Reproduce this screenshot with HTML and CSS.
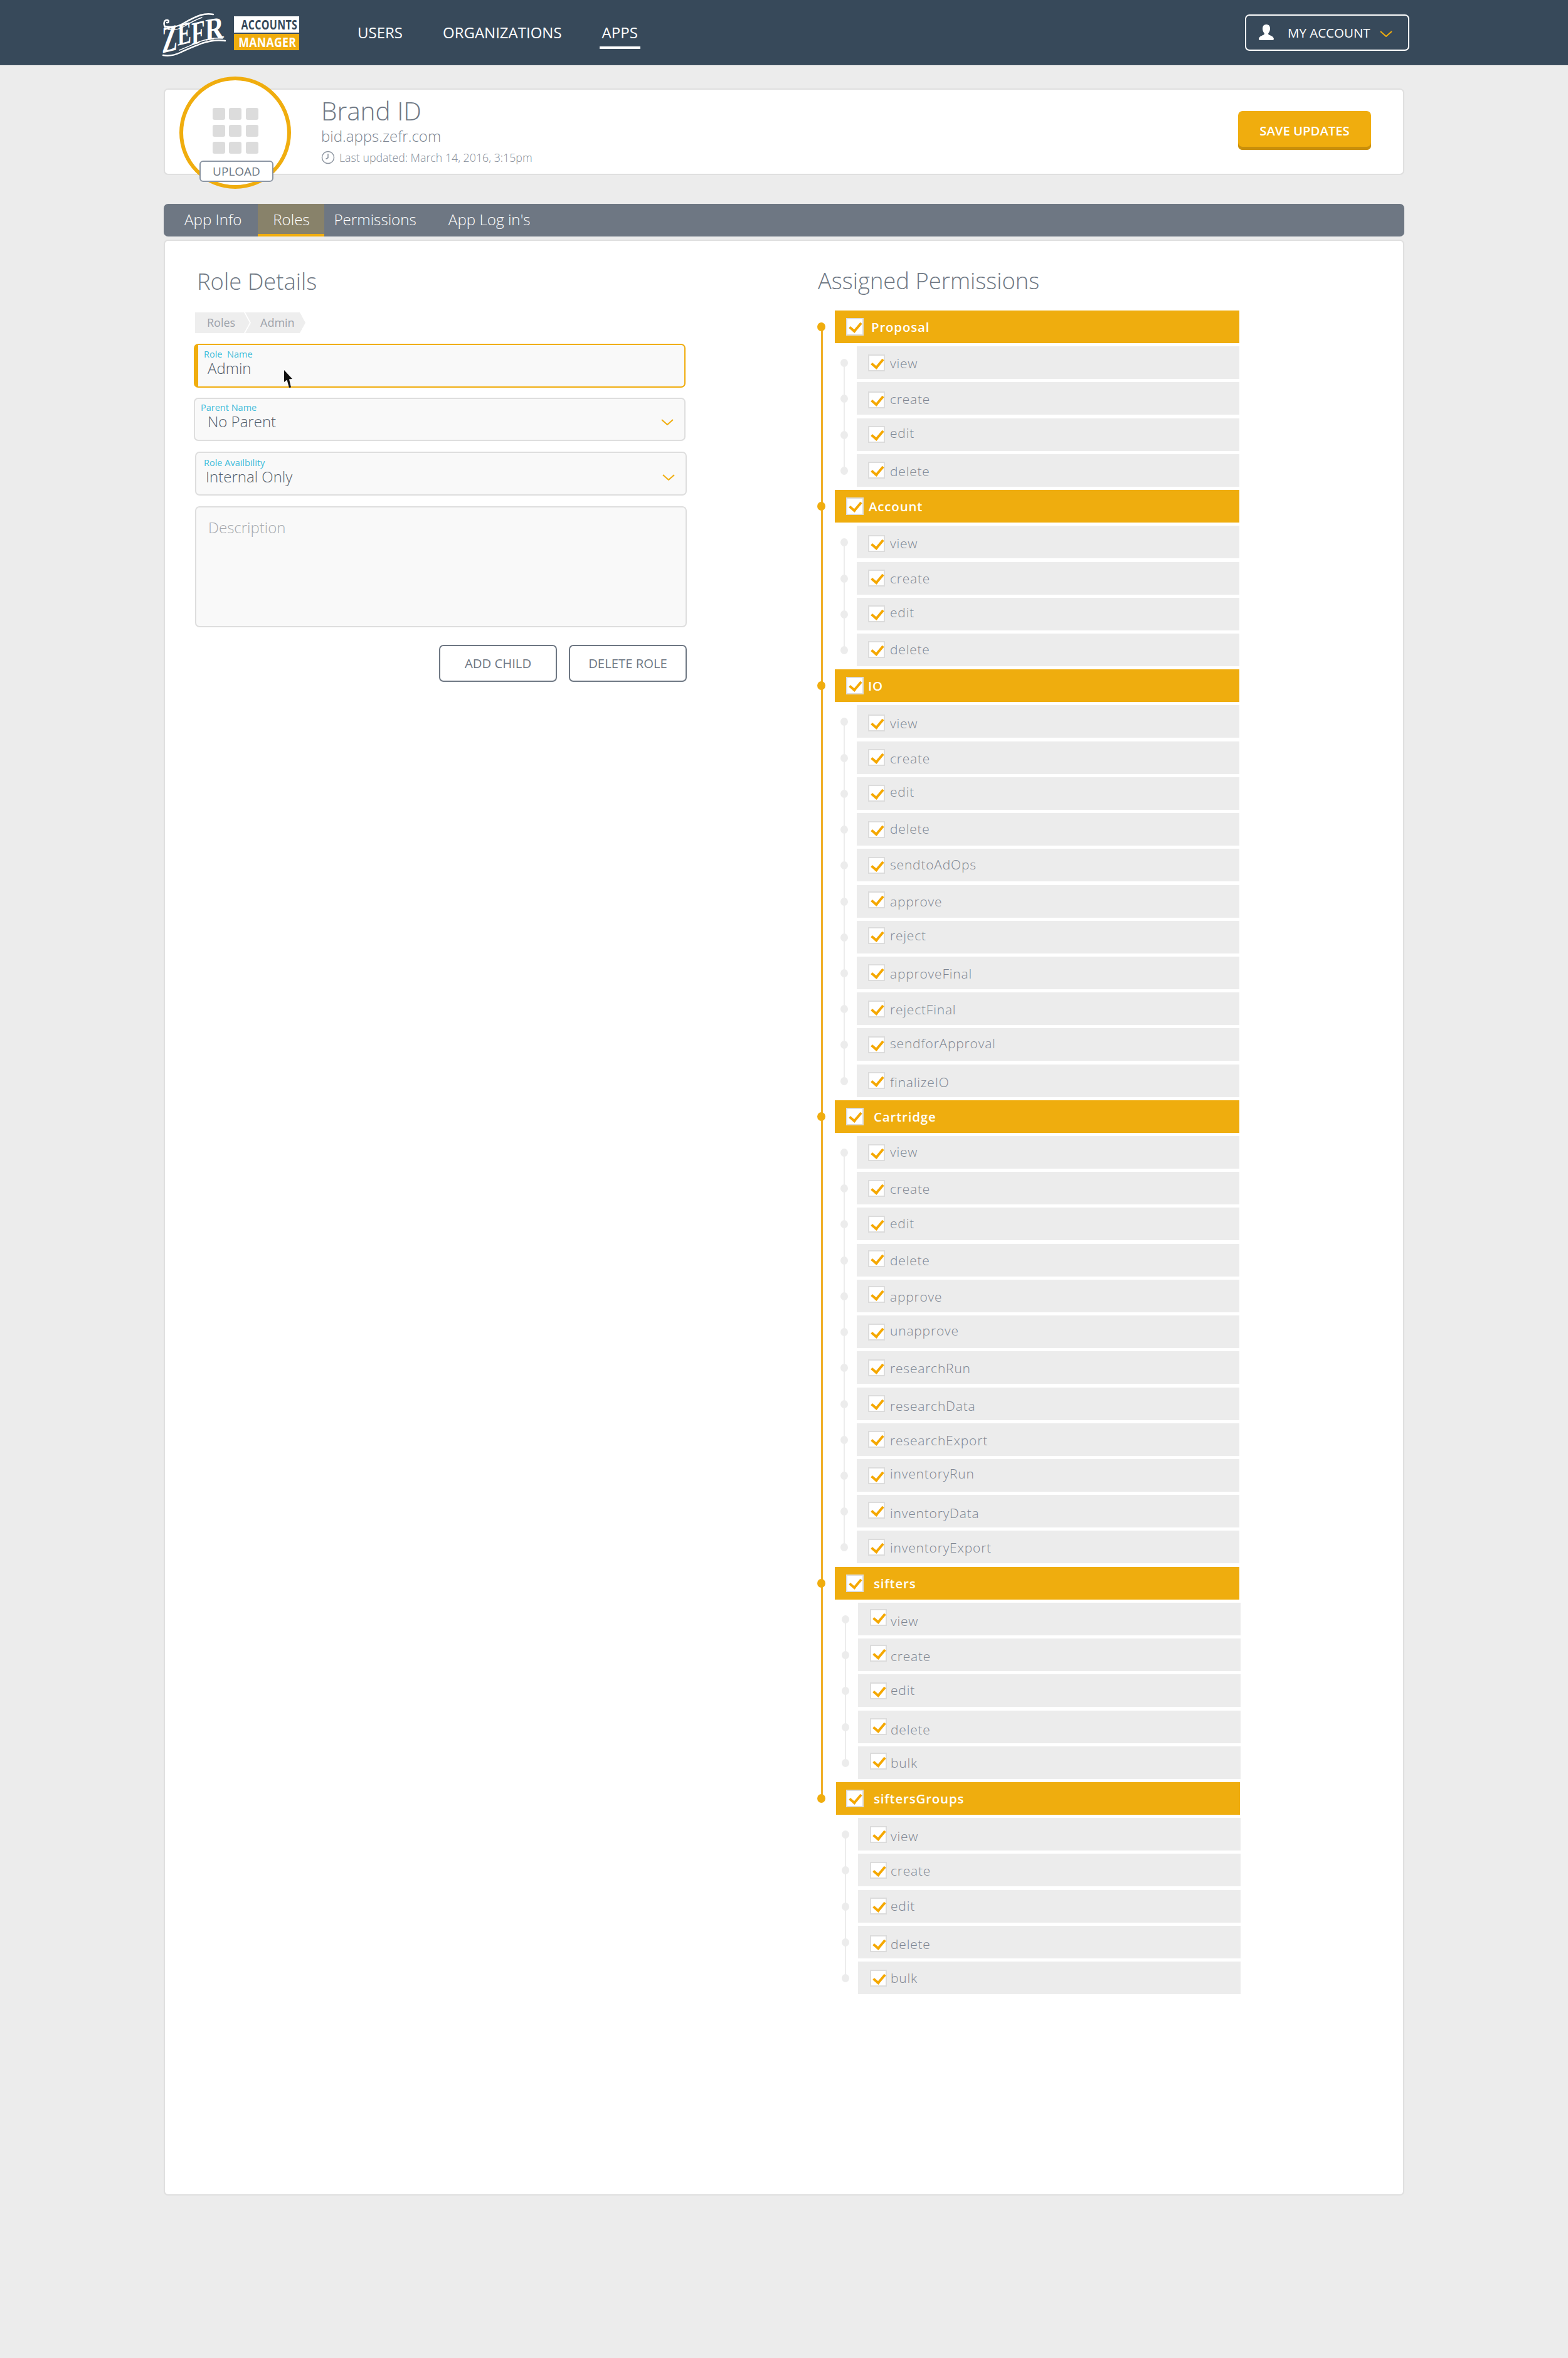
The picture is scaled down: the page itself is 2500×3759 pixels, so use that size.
FILE: index.html
```html
<!DOCTYPE html>
<html lang="en">
<head>
<meta charset="utf-8">
<title>ZEFR Accounts Manager</title>
<link rel="stylesheet" href="styles.css">
</head>
<body>
<header class="topbar">
  <div class="brand">
    <svg class="zefr" viewBox="0 0 110 76" width="110" height="76" aria-label="ZEFR">
      <g fill="none" stroke="#fff" stroke-linecap="round">
        <path stroke-width="2.4" d="M7 25C4 19 6 13 11 14c3 1 2 5-1 4M8 24c9 2 17 1 25-3C44 15 54 9 64 6c7-2 15-2 20-1"/>
        <path stroke-width="1.4" d="M12 29c9 1 17 0 24-4C46 19 56 13 66 10"/>
        <path stroke-width="2.4" d="M4 70c9 2 18 0 27-4C43 60 54 56 66 51c12-4 25-6 37-4"/>
        <path stroke-width="1.4" d="M30 62c10-4 21-9 33-14 12-4 25-6 36-5"/>
      </g>
      <g class="zefr-letters" fill="#fff">
        <text transform="translate(2 67) skewY(-14) scale(.62 1)" font-size="60">Z</text>
        <text transform="translate(27 55) skewY(-14) scale(.66 1)" font-size="50">E</text>
        <text transform="translate(49 54) skewY(-14) scale(.68 1)" font-size="52">F</text>
        <text transform="translate(71 47) skewY(-10) scale(.82 1)" font-size="50">R</text>
      </g>
    </svg>
    <div class="lockup">
      <span class="lockup-a"><span class="squeeze">ACCOUNTS</span></span>
      <span class="lockup-m"><span class="squeeze squeeze-m">MANAGER</span></span>
    </div>
  </div>
  <nav class="nav">
    <a class="nav-item">USERS</a>
    <a class="nav-item">ORGANIZATIONS</a>
    <a class="nav-item nav-active">APPS</a>
  </nav>
  <button class="account">
    <svg class="person" viewBox="0 0 24 26" width="24" height="26"><path fill="#fff" d="M12 0c4 0 6 2.800 6 6.500 0 3-1 5.500-2.600 7.300-.5.600-.4 2 .4 2.500 2.700 1.500 7.400 2.700 8.100 6.200.2 1.400-.5 2.500-2 2.500H2.100C.6 25-.1 23.900.1 22.500c.7-3.500 5.400-4.700 8.100-6.200.8-.5.900-1.900.4-2.500C7 12 6 9.500 6 6.500 6 2.800 8 0 12 0z"/></svg>
    <span class="account-text">MY ACCOUNT</span>
    <svg class="chev" viewBox="0 0 20 10" width="20" height="10"><path d="M1 1l9 8 9-8"/></svg>
  </button>
</header>

<main class="page">
  <section class="card-top">
    <div class="avatar">
      <div class="app-grid"><i></i><i></i><i></i><i></i><i></i><i></i><i></i><i></i><i></i></div>
      <span class="upload">UPLOAD</span>
    </div>
    <div class="app-info">
      <h1 class="app-name">Brand ID</h1>
      <div class="app-url">bid.apps.zefr.com</div>
      <div class="app-updated">
        <svg viewBox="0 0 22 22" width="22" height="22"><circle cx="11" cy="11" r="9.500" fill="none" stroke="#8d95a0" stroke-width="1.500"/><path d="M11 5v6.500l-3.500 2" fill="none" stroke="#8d95a0" stroke-width="1.500"/></svg>
        <span>Last updated: March 14, 2016, 3:15pm</span>
      </div>
    </div>
    <button class="save">SAVE UPDATES</button>
  </section>

  <div class="tabs">
    <a class="tab tab-info">App Info</a>
    <a class="tab tab-roles">Roles</a>
    <a class="tab tab-perm">Permissions</a>
    <a class="tab tab-log">App Log in's</a>
  </div>

  <section class="card-main">
    <div class="col-left">
      <h2 class="title-role">Role Details</h2>
      <div class="crumbs">
        <span class="crumb crumb-first">Roles</span>
        <span class="crumb crumb-last">Admin</span>
      </div>
      <div class="field field-name">
        <div class="field-body">
          <label class="field-label">Role&nbsp; Name</label>
          <div class="field-value">Admin</div>
        </div>
        <svg class="cursor" viewBox="0 0 14 28" width="14" height="28"><path fill="#111" d="M0 0l13 14-5 .5 3 13-3 .5-3.500-12.500L0 19z"/></svg>
      </div>
      <div class="field field-parent">
        <div class="field-body">
          <label class="field-label">Parent Name</label>
          <div class="field-value">No Parent</div>
        </div>
        <svg class="chev" viewBox="0 0 20 10" width="20" height="10"><path d="M1 1l9 8 9-8"/></svg>
      </div>
      <div class="field field-avail">
        <div class="field-body">
          <label class="field-label">Role Availbility</label>
          <div class="field-value">Internal Only</div>
        </div>
        <svg class="chev" viewBox="0 0 20 10" width="20" height="10"><path d="M1 1l9 8 9-8"/></svg>
      </div>
      <div class="desc">Description</div>
      <div class="actions">
        <button class="ghost">ADD CHILD</button>
        <button class="ghost">DELETE ROLE</button>
      </div>
    </div>

    <div class="col-right">
      <h2 class="title-perm">Assigned Permissions</h2>
      <div class="tree">

        <div class="group">
          <div class="head"><span class="box"></span><span class="head-text ht-proposal">Proposal</span></div>
          <div class="subs">
            <div class="row"><span class="box"></span><span class="lbl t1">view</span></div>
            <div class="row"><span class="box c-p2"></span><span class="lbl t1">create</span></div>
            <div class="row"><span class="box"></span><span class="lbl t-3">edit</span></div>
            <div class="row"><span class="box"></span><span class="lbl t1">delete</span></div>
          </div>
        </div>

        <div class="group">
          <div class="head"><span class="box"></span><span class="head-text ht-account">Account</span></div>
          <div class="subs">
            <div class="row"><span class="box c-p2"></span><span class="lbl t2">view</span></div>
            <div class="row"><span class="box"></span><span class="lbl t0">create</span></div>
            <div class="row"><span class="box"></span><span class="lbl t-3">edit</span></div>
            <div class="row"><span class="box"></span><span class="lbl t-1">delete</span></div>
          </div>
        </div>

        <div class="group">
          <div class="head"><span class="box"></span><span class="head-text ht-io">IO</span></div>
          <div class="subs">
            <div class="row"><span class="box c-p2"></span><span class="lbl t3">view</span></div>
            <div class="row"><span class="box"></span><span class="lbl t1">create</span></div>
            <div class="row"><span class="box"></span><span class="lbl t-3">edit</span></div>
            <div class="row"><span class="box"></span><span class="lbl t-1">delete</span></div>
            <div class="row"><span class="box"></span><span class="lbl t-1">sendtoAdOps</span></div>
            <div class="row"><span class="box c-m2"></span><span class="lbl t0">approve</span></div>
            <div class="row"><span class="box c-m2"></span><span class="lbl t-3">reject</span></div>
            <div class="row"><span class="box"></span><span class="lbl t1">approveFinal</span></div>
            <div class="row"><span class="box"></span><span class="lbl t1">rejectFinal</span></div>
            <div class="row"><span class="box"></span><span class="lbl t-2">sendforApproval</span></div>
            <div class="row"><span class="box"></span><span class="lbl t2">finalizeIO</span></div>
          </div>
        </div>

        <div class="group">
          <div class="head"><span class="box"></span><span class="head-text ht-cart">Cartridge</span></div>
          <div class="subs">
            <div class="row"><span class="box"></span><span class="lbl t-1">view</span></div>
            <div class="row"><span class="box"></span><span class="lbl t1">create</span></div>
            <div class="row"><span class="box"></span><span class="lbl t-1">edit</span></div>
            <div class="row"><span class="box c-m2"></span><span class="lbl t0">delete</span></div>
            <div class="row"><span class="box c-m2"></span><span class="lbl t1">approve</span></div>
            <div class="row"><span class="box"></span><span class="lbl t-2">unapprove</span></div>
            <div class="row"><span class="box"></span><span class="lbl t1">researchRun</span></div>
            <div class="row"><span class="box"></span><span class="lbl t3">researchData</span></div>
            <div class="row"><span class="box"></span><span class="lbl t1">researchExport</span></div>
            <div class="row"><span class="box"></span><span class="lbl t-3">inventoryRun</span></div>
            <div class="row"><span class="box c-m2"></span><span class="lbl t3">inventoryData</span></div>
            <div class="row"><span class="box"></span><span class="lbl t1">inventoryExport</span></div>
          </div>
        </div>

        <div class="group">
          <div class="head"><span class="box"></span><span class="head-text ht-sift">sifters</span></div>
          <div class="subs subs-shift">
            <div class="row"><span class="box c-m2"></span><span class="lbl t3">view</span></div>
            <div class="row"><span class="box c-m3"></span><span class="lbl t2">create</span></div>
            <div class="row"><span class="box"></span><span class="lbl t-1">edit</span></div>
            <div class="row"><span class="box"></span><span class="lbl t4">delete</span></div>
            <div class="row"><span class="box c-m2"></span><span class="lbl t0">bulk</span></div>
          </div>
        </div>

        <div class="group">
          <div class="head head-shift"><span class="box"></span><span class="head-text ht-sift">siftersGroups</span></div>
          <div class="subs subs-shift">
            <div class="row"><span class="box"></span><span class="lbl t3">view</span></div>
            <div class="row"><span class="box"></span><span class="lbl t1">create</span></div>
            <div class="row"><span class="box"></span><span class="lbl t-1">edit</span></div>
            <div class="row"><span class="box c-p3"></span><span class="lbl t3">delete</span></div>
            <div class="row"><span class="box"></span><span class="lbl t0">bulk</span></div>
          </div>
        </div>

      </div>
    </div>
  </section>
</main>
</body>
</html>
```
FILE: styles.css
```css
* { box-sizing: border-box; }

html, body { margin: 0; padding: 0; }

body {
  min-height: 3759px;
  background: #ececec;
  font-family: "Open Sans", "Liberation Sans", sans-serif;
  color: #6e7783;
}

button { font-family: inherit; cursor: pointer; }

/* top bar */
.topbar {
  display: flex;
  height: 104px;
  background: #37495a;
  border-bottom: 1px solid #4a5a69;
  padding-right: 253px;
}

.brand {
  display: flex;
  align-items: flex-start;
  padding: 18px 0 0 256px;
  gap: 7px;
}

.zefr { overflow: visible; }
.zefr-letters { font-family: "Liberation Serif", serif; font-weight: 700; }

.lockup {
  display: flex;
  flex-direction: column;
  gap: 2px;
  width: 104px;
  padding-top: 8px;
}

.lockup-a, .lockup-m {
  display: block;
  height: 26px;
  line-height: 26px;
  text-align: center;
  font-size: 20.500px;
  font-weight: 700;
}

.lockup-a { background: #fff; color: #37495a; }
.lockup-m { background: #f0ad0e; color: #fff; }

.squeeze { display: inline-block; width: 104px; transform: scaleX(.78); white-space: nowrap; letter-spacing: .4px; }
.squeeze-m { transform: scaleX(.86); }

.nav {
  display: flex;
  align-items: flex-start;
  gap: 56px;
  margin-left: 89px;
  padding-top: 36px;
}

.nav-item {
  display: block;
  padding: 0 4px 6px;
  font-size: 24px;
  line-height: 32px;
  color: #fff;
  border-bottom: 4px solid transparent;
}

.nav-active { border-bottom-color: #fff; }

.account {
  display: flex;
  align-items: center;
  width: 262px;
  height: 58px;
  margin: 23px 0 0 auto;
  padding: 0 0 0 20px;
  background: transparent;
  border: 2px solid #fff;
  border-radius: 7px;
  color: #fff;
}

.account-text { margin-left: 22px; font-size: 20.500px; font-weight: 400; white-space: nowrap; }
.account .chev { margin: 4px 0 0 15px; }

.chev { flex: none; }
.chev path { fill: none; stroke: #f0ad0e; stroke-width: 2; }

/* layout */
.page {
  width: 1978px;
  margin-left: 261px;
  padding-top: 37px;
}

.card-top {
  display: flex;
  align-items: flex-start;
  height: 138px;
  background: #fff;
  border: 2px solid #dfdfdf;
  border-radius: 7px;
  padding-left: 23px;
}

.avatar {
  position: relative;
  flex: none;
  width: 178px;
  height: 179px;
  margin-top: -21px;
  padding-top: 44px;
  display: flex;
  justify-content: center;
  border: 6px solid #f0ad0e;
  border-radius: 50%;
  background: #fff;
}

.app-grid {
  display: grid;
  grid-template-columns: repeat(3, 20px);
  grid-auto-rows: 19px;
  gap: 8px 6.500px;
  height: 73px;
}

.app-grid i { background: #dcdcdc; border-radius: 3px; }

.upload {
  position: absolute;
  left: 26px;
  top: 128px;
  width: 118px;
  height: 34px;
  line-height: 30px;
  text-align: center;
  font-size: 19px;
  font-weight: 500;
  color: #6e7783;
  background: #fff;
  border: 2px solid #8b95a3;
  border-radius: 6px;
}

.app-info { margin-left: 48px; padding-top: 10px; }

.app-name {
  margin: 0;
  font-size: 40.500px;
  line-height: 48px;
  font-weight: 300;
  color: #6e7783;
}

.app-url { font-size: 24px; line-height: 32px; font-weight: 300; color: #7c8591; }

.app-updated {
  display: flex;
  align-items: center;
  gap: 7px;
  margin-top: 6px;
  font-size: 17.800px;
  line-height: 24px;
  font-weight: 300;
  color: #858d98;
}

.save {
  width: 212px;
  height: 62px;
  margin: 34px 51px 0 auto;
  padding: 0;
  border: 0;
  border-radius: 7px;
  background: #f0ad0e;
  box-shadow: inset 0 -5px 0 #c98f0b;
  color: #fff;
  font-size: 20.300px;
  font-weight: 600;
}

.tabs {
  display: flex;
  align-items: stretch;
  height: 52px;
  margin-top: 46px;
  background: #6e7783;
  border-radius: 7px;
  font-size: 24.200px;
  font-weight: 300;
  color: #fff;
  overflow: hidden;
}

.tab { display: flex; align-items: center; padding-bottom: 4px; }
.tab-info { padding-left: 33px; padding-right: 26px; }
.tab-roles {
  width: 106px;
  justify-content: center;
  background: #88826a;
  border-bottom: 4px solid #f0ad0e;
  padding-bottom: 0;
}
.tab-perm { padding-left: 15px; }
.tab-log { padding-left: 51px; }

.card-main {
  display: flex;
  height: 3118px;
  margin-top: 5px;
  background: #fff;
  border: 2px solid #dfdfdf;
  border-radius: 7px;
  padding-left: 46px;
}

.col-left { flex: none; width: 786px; }
.col-right { flex: none; width: 680px; margin-left: 205px; }

.title-role, .title-perm {
  margin: 0;
  font-size: 36.400px;
  line-height: 44px;
  font-weight: 300;
  color: #6e7783;
}

.title-role { padding: 42px 0 0 5px; height: 86px; }
.title-perm { padding: 41px 0 0 4px; height: 83px; }

/* breadcrumb */
.crumbs {
  display: flex;
  height: 33px;
  margin: 28px 0 17px 2px;
  font-size: 18px;
  line-height: 33px;
  color: #9ea3ab;
}

.crumb { display: block; background: #eeeeee; }
.crumb-first {
  width: 87px;
  padding-left: 19px;
  clip-path: polygon(0 0, 78px 0, 100% 50%, 78px 100%, 0 100%);
}
.crumb-last {
  width: 96px;
  margin-left: -7px;
  padding-left: 24px;
  clip-path: polygon(0 0, 87px 0, 100% 50%, 87px 100%, 0 100%, 9px 50%);
}

/* form */
.field {
  position: relative;
  display: flex;
  align-items: center;
  width: 784px;
  background: #f9f9f9;
  border: 2px solid #dedede;
  border-radius: 7px;
}

.field-body { flex: 1; align-self: flex-start; }

.field-label {
  display: block;
  font-size: 14.500px;
  line-height: 14px;
  color: #3fbcd9;
}

.field-value { font-size: 24px; line-height: 30px; font-weight: 300; color: #55606c; }

.field .chev { margin-top: 2px; margin-right: 17px; }

.field-name {
  height: 70px;
  padding: 8px 0 0 9px;
  border-color: #f0ad0e;
  border-left-width: 7px;
  margin-bottom: 16px;
}
.field-name .field-value { margin-left: 6px; }

.field-parent { height: 69px; padding: 7px 0 0 9px; margin-bottom: 17px; }
.field-parent .field-value { margin-left: 11px; }

.field-avail { height: 70px; padding: 9px 0 0 12px; margin: 0 0 17px 2px; }
.field-avail .field-value { margin-left: 3px; }

.cursor { position: absolute; left: 137px; top: 40px; }

.desc {
  width: 784px;
  height: 193px;
  margin-left: 2px;
  padding: 17px 0 0 19px;
  background: #f9f9f9;
  border: 2px solid #dedede;
  border-radius: 7px;
  font-size: 24px;
  line-height: 30px;
  font-weight: 300;
  color: #a6a9ae;
}

.actions { display: flex; justify-content: flex-end; gap: 19px; margin-top: 28px; }

.ghost {
  width: 188px;
  height: 59px;
  padding: 0 0 2px;
  background: #fff;
  border: 2px solid #6e7783;
  border-radius: 7px;
  color: #6e7783;
  font-size: 20.300px;
  font-weight: 400;
}

/* permission tree */
.tree {
  position: relative;
  display: flex;
  flex-direction: column;
  gap: 5.220px;
  width: 676px;
  margin-top: 28px;
  padding-left: 31px;
}

.tree::before {
  content: "";
  position: absolute;
  left: 9px;
  top: 26px;
  bottom: 313px;
  width: 3px;
  background: #f0b02a;
}

.group { display: flex; flex-direction: column; gap: 5.220px; }

.head, .row {
  position: relative;
  display: flex;
  align-items: center;
  height: 52px;
  flex: none;
}

.head {
  padding-left: 18px;
  background: #efad0e;
}

.head::before {
  content: "";
  position: absolute;
  left: -28px;
  top: 19px;
  width: 13px;
  height: 14px;
  border-radius: 50%;
  background: #f0ad0e;
}

.head-shift { margin: 0 -1px 0 2px; padding-left: 16px; }
.head-shift::before { left: -30px; }

.head-text {
  font-size: 20.500px;
  font-weight: 600;
  letter-spacing: .8px;
  color: #fff;
}

.ht-proposal { margin-left: 12px; }
.ht-account { margin-left: 8px; }
.ht-io { margin-left: 7px; }
.ht-cart { margin-left: 16px; }
.ht-sift { margin-left: 16px; }

.subs {
  position: relative;
  display: flex;
  flex-direction: column;
  gap: 5.220px;
  margin-left: 35px;
}

.subs::before {
  content: "";
  position: absolute;
  left: -21px;
  top: 26px;
  bottom: 26px;
  width: 2px;
  background: #ececec;
}

.subs-shift { margin: 0 -2px 0 37px; }
.subs-shift .row { padding-left: 19px; }
.subs-shift .lbl { margin-left: 6px; }

.row {
  padding-left: 18px;
  background: #ececec;
}

.row::before {
  content: "";
  position: absolute;
  left: -26px;
  top: 20px;
  width: 12px;
  height: 13px;
  border-radius: 50%;
  background: #ececec;
}

.lbl {
  margin-left: 8px;
  font-size: 21px;
  font-weight: 300;
  letter-spacing: .8px;
  color: #7e8692;
}

.t-3 { transform: translateY(-3px); }
.t-2 { transform: translateY(-2px); }
.t-1 { transform: translateY(-1px); }
.t0  { transform: none; }
.t1  { transform: translateY(1px); }
.t2  { transform: translateY(2px); }
.t3  { transform: translateY(3px); }
.t4  { transform: translateY(4px); }

.box {
  position: relative;
  flex: none;
  width: 27px;
  height: 27px;
  background: #fff;
  border: 2px solid #dcdcdc;
}

.head .box { width: 28px; height: 28px; }

.box::after {
  content: "";
  position: absolute;
  left: 7px;
  top: 1px;
  width: 7.500px;
  height: 15px;
  border-right: 4px solid #f5a800;
  border-bottom: 4px solid #f5a800;
  transform: rotate(40deg);
}

.c-m3 { transform: translateY(-3px); }
.c-m2 { transform: translateY(-2px); }
.c-p2 { transform: translateY(2px); }
.c-p3 { transform: translateY(3px); }
```
